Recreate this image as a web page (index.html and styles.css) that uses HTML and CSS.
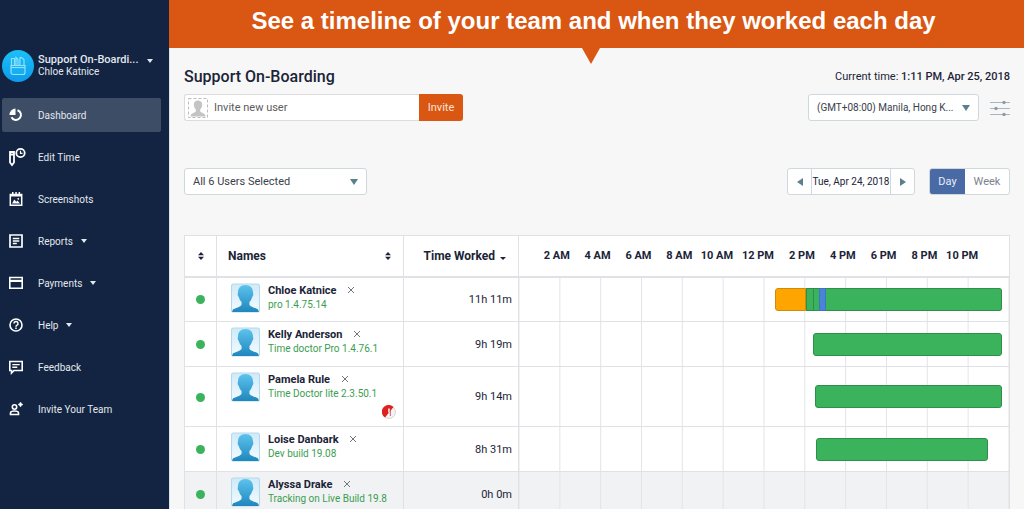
FILE: index.html
```html
<!DOCTYPE html>
<html lang="en">
<head>
  <meta charset="UTF-8">
  <meta name="viewport" content="width=device-width, initial-scale=1">
  <title>Dashboard - Support On-Boarding</title>
  <link rel="stylesheet" href="styles.css">
</head>
<body>

<!-- shared shapes -->
<svg class="sprite" aria-hidden="true">
  <defs>
    <linearGradient id="person-fill" x1="0" y1="0" x2="0" y2="1">
      <stop offset="0" stop-color="#5cc3ee"/>
      <stop offset="1" stop-color="#1f87bd"/>
    </linearGradient>
    <linearGradient id="person-bg" x1="0" y1="0" x2="0" y2="1">
      <stop offset="0" stop-color="#cfeaf8"/>
      <stop offset="1" stop-color="#f4fbff"/>
    </linearGradient>
  </defs>
  <symbol id="person" viewBox="0 0 28 28">
    <rect x="0.5" y="0.5" width="27" height="27" rx="2" fill="url(#person-bg)" stroke="#b5d9ea"/>
    <path d="M14 1.5c-4.600 0-7.200 2.900-7.200 7 0 1-.6 1.300-.3 2.700.3 1.300.9 1.500 1.200 2.300.5 2 1.600 3.400 2.500 4.300v2.600c-.7 2-5.400 2.800-7.700 4.300-.9.700-1.300 1.800-1.300 2.800h25.600c0-1-.4-2.100-1.300-2.800-2.300-1.500-7-2.300-7.700-4.300v-2.600c.9-.9 2-2.300 2.500-4.300.3-.8.900-1 1.200-2.300.3-1.400-.3-1.700-.3-2.700 0-4.100-2.600-7-7.200-7z" fill="url(#person-fill)"/>
  </symbol>
  <symbol id="sort" viewBox="0 0 6 8">
    <path d="M3 0l3 3.300H0zM3 8l3-3.300H0z"/>
  </symbol>
  <symbol id="cross" viewBox="0 0 8 8">
    <path d="M1 1l6 6M7 1l-6 6" fill="none" stroke="#70757c" stroke-width="1"/>
  </symbol>
</svg>

<div class="app">
  <aside class="sidebar">
    <button class="account" type="button">
      <span class="account-logo">
        <svg width="16" height="20" viewBox="0 0 16 20" fill="none" stroke="#8be3ff" stroke-width="1.200">
          <path d="M1.500 9V2.500h3V9M6 9V1.500l2 2v5.500M10 9V1.500h1.500l2.500 2V9"/>
          <path d="M1 9.500h14v7a2 2 0 0 1-2 2H3a2 2 0 0 1-2-2z" fill="#18aef0"/>
          <path d="M1 11.500h14"/>
        </svg>
      </span>
      <span class="account-text">
        <strong>Support On-Boardi...</strong>
        <span>Chloe Katnice</span>
      </span>
      <span class="caret"></span>
    </button>

    <nav class="menu">
      <a class="menu-item active" href="#dashboard">
        <svg class="menu-icon" viewBox="0 0 16 16">
          <path d="M9.500 3.200a5 5 0 1 1-6 7" fill="none" stroke="#fff" stroke-width="2"/>
          <path d="M7.500 1.500v6.500H1.500A6.500 6.500 0 0 1 7.500 1.500z" fill="#fff"/>
        </svg>
        Dashboard
      </a>
      <a class="menu-item" href="#edit-time">
        <svg class="menu-icon wide" viewBox="0 0 18 20" fill="none" stroke="#fff">
          <path d="M2 5h4v10.500L4 18l-2-2.500zM2 7.500h4" stroke-width="1.800"/>
          <circle cx="12.500" cy="6" r="4.200" stroke-width="1.800"/>
          <path d="M12.500 3.800V6.400h2" stroke-width="1.200"/>
        </svg>
        Edit Time
      </a>
      <a class="menu-item" href="#screenshots">
        <svg class="menu-icon" viewBox="0 0 16 16">
          <path d="M2.300 3.500h11.400v10.700H2.300z" fill="none" stroke="#fff" stroke-width="1.500"/>
          <path d="M2 3h12v2.500H2zM4 1h1.500v3H4zM7.300 1h1.500v3H7.300zM10.600 1h1.500v3h-1.500zM4 12.500l2.300-4 2 2.300 1.200-1.300 2.500 3z" fill="#fff"/>
          <circle cx="10.300" cy="7.800" r="0.900" fill="#fff"/>
        </svg>
        Screenshots
      </a>
      <a class="menu-item" href="#reports">
        <svg class="menu-icon" viewBox="0 0 16 16" fill="none" stroke="#fff">
          <path d="M2 2h12v12H2z" stroke-width="1.700"/>
          <path d="M4.800 5.500h6.500M4.800 8h6.500M4.800 10.500h4" stroke-width="1.400"/>
        </svg>
        Reports <span class="caret"></span>
      </a>
      <a class="menu-item" href="#payments">
        <svg class="menu-icon" viewBox="0 0 16 16">
          <path d="M1.800 2.500h12.400v10.800H1.800z" fill="none" stroke="#fff" stroke-width="1.600"/>
          <path d="M2 4.800h12v2.200H2z" fill="#fff"/>
        </svg>
        Payments <span class="caret"></span>
      </a>
      <a class="menu-item" href="#help">
        <svg class="menu-icon" viewBox="0 0 16 16" fill="none" stroke="#fff">
          <circle cx="8" cy="8" r="6" stroke-width="1.600"/>
          <path d="M6 6.600a2 2 0 1 1 2.800 1.800c-.6.300-.8.600-.8 1.300M8 10.600v1.400" stroke-width="1.500"/>
        </svg>
        Help <span class="caret"></span>
      </a>
      <a class="menu-item" href="#feedback">
        <svg class="menu-icon" viewBox="0 0 16 16" fill="none" stroke="#fff">
          <path d="M1.800 2.500h12.400v9H6L3.500 14v-2.500H1.800z" stroke-width="1.600"/>
          <path d="M4.300 5.600h7.400M4.300 8.300h5" stroke-width="1.400"/>
        </svg>
        Feedback
      </a>
      <a class="menu-item" href="#invite">
        <svg class="menu-icon" viewBox="0 0 16 16">
          <circle cx="6.500" cy="6" r="2.200" fill="none" stroke="#fff" stroke-width="1.600"/>
          <path d="M2.500 13.500v-1.500c0-1.600 2-2 4-2s4 .4 4 2v1.500z" fill="none" stroke="#fff" stroke-width="1.600"/>
          <path d="M12.500 1l.9 1.600 1.600.9-1.600.9-.9 1.600-.9-1.600-1.600-.9 1.600-.9z" fill="#fff" stroke="#fff" stroke-width="0.500"/>
        </svg>
        Invite Your Team
      </a>
    </nav>
  </aside>

  <div class="page">
    <div class="banner">See a timeline of your team and when they worked each day</div>

    <main class="content">
      <div class="title-row">
        <h1>Support On-Boarding</h1>
        <p class="current-time">Current time: <strong>1:11 PM, Apr 25, 2018</strong></p>
      </div>

      <div class="bar-row">
        <form class="invite">
          <label class="invite-field">
            <svg width="20" height="20" viewBox="0 0 20 20">
              <rect x="0.500" y="0.500" width="19" height="19" fill="none" stroke="#bcbcbc" stroke-dasharray="3 2"/>
              <path d="M10 2.500c-2.700 0-4.200 1.800-4.200 4.300 0 2 .9 3.700 2 4.700v1.800c-.5 1.500-5.300 1.700-5.300 5.200h15c0-3.500-4.800-3.700-5.300-5.200v-1.800c1.100-1 2-2.700 2-4.700 0-2.500-1.500-4.300-4.200-4.300z" fill="#c4c4c4"/>
            </svg>
            <input type="text" placeholder="Invite new user" aria-label="Invite new user">
          </label>
          <button class="invite-button" type="submit">Invite</button>
        </form>
        <div class="bar-right">
          <div class="select-box timezone">
            <select aria-label="Time zone">
              <option>(GMT+08:00) Manila, Hong K...</option>
            </select>
          </div>
          <button class="settings" type="button" aria-label="Settings">
            <svg width="20" height="16" viewBox="0 0 20 16" stroke="#a9b4bc" fill="#8d9ba5">
              <path d="M0 2.500h20M0 8.500h20M0 14.500h20"/>
              <g stroke="none">
                <circle cx="14" cy="2.500" r="1.700"/>
                <circle cx="6" cy="8.500" r="1.700"/>
                <circle cx="14" cy="14.500" r="1.700"/>
              </g>
            </svg>
          </button>
        </div>
      </div>

      <div class="bar-row filters">
        <div class="select-box users">
          <select aria-label="Users">
            <option>All 6 Users Selected</option>
          </select>
        </div>
        <div class="bar-right">
          <div class="group">
            <button class="step" type="button" aria-label="Previous day"><span class="arrow prev"></span></button>
            <input class="date" type="text" value="Tue, Apr 24, 2018" aria-label="Date">
            <button class="step" type="button" aria-label="Next day"><span class="arrow next"></span></button>
          </div>
          <div class="group view">
            <button class="selected" type="button">Day</button>
            <button type="button">Week</button>
          </div>
        </div>
      </div>

      <table class="timeline">
        <colgroup>
          <col class="col-status">
          <col class="col-name">
          <col class="col-worked">
          <col>
        </colgroup>
        <thead>
          <tr>
            <th class="status"><svg class="sort"><use href="#sort"/></svg></th>
            <th><div class="head-name">Names <svg class="sort"><use href="#sort"/></svg></div></th>
            <th class="worked">Time Worked <span class="caret dark"></span></th>
            <th class="hours-cell">
              <div class="hours">
                <span>2 AM</span><span>4 AM</span><span>6 AM</span><span>8 AM</span><span>10 AM</span><span>12 PM</span><span>2 PM</span><span>4 PM</span><span>6 PM</span><span>8 PM</span><span>10 PM</span>
              </div>
            </th>
          </tr>
        </thead>
        <tbody>
          <tr>
            <td class="status"><span class="dot"></span></td>
            <td class="user-cell">
              <div class="user">
                <svg class="avatar"><use href="#person"/></svg>
                <div>
                  <div class="user-name">Chloe Katnice <button type="button" aria-label="Remove Chloe Katnice"><svg width="8" height="8"><use href="#cross"/></svg></button></div>
                  <div class="version">pro 1.4.75.14</div>
                </div>
              </div>
            </td>
            <td class="worked">11h 11m</td>
            <td class="track">
              <div class="bars">
                <span class="bar orange first" style="left: 52.3%; width: 6.3%"></span>
                <span class="bar mid" style="left: 58.5%; width: 1.7%"></span>
                <span class="bar mid" style="left: 60%; width: 1.4%"></span>
                <span class="bar blue mid" style="left: 61.2%; width: 1.4%"></span>
                <span class="bar last" style="left: 62.6%; width: 36%"></span>
              </div>
            </td>
          </tr>
          <tr>
            <td class="status"><span class="dot"></span></td>
            <td class="user-cell">
              <div class="user">
                <svg class="avatar"><use href="#person"/></svg>
                <div>
                  <div class="user-name">Kelly Anderson <button type="button" aria-label="Remove Kelly Anderson"><svg width="8" height="8"><use href="#cross"/></svg></button></div>
                  <div class="version">Time doctor Pro 1.4.76.1</div>
                </div>
              </div>
            </td>
            <td class="worked">9h 19m</td>
            <td class="track"><div class="bars"><span class="bar" style="left: 60%; width: 38.6%"></span></div></td>
          </tr>
          <tr>
            <td class="status"><span class="dot"></span></td>
            <td class="user-cell">
              <div class="user">
                <svg class="avatar"><use href="#person"/></svg>
                <div>
                  <div class="user-name">Pamela Rule <button type="button" aria-label="Remove Pamela Rule"><svg width="8" height="8"><use href="#cross"/></svg></button></div>
                  <div class="version">Time Doctor lite 2.3.50.1</div>
                </div>
              </div>
              <svg class="alert" viewBox="0 0 14 14">
                <circle cx="7" cy="7" r="6.500" fill="#f3f3f3" stroke="#d5d5d5"/>
                <path d="M3 12.500A6.800 6.800 0 1 1 11.500 2z" fill="#e01f1f"/>
                <path d="M7 3.500v4M7 9v1.500" stroke="#fff" stroke-width="1.500"/>
                <path d="M8.300 5v6" stroke="#c33" stroke-width="0.800"/>
              </svg>
            </td>
            <td class="worked">9h 14m</td>
            <td class="track"><div class="bars"><span class="bar" style="left: 60.5%; width: 38.1%"></span></div></td>
          </tr>
          <tr>
            <td class="status"><span class="dot"></span></td>
            <td class="user-cell">
              <div class="user">
                <svg class="avatar"><use href="#person"/></svg>
                <div>
                  <div class="user-name">Loise Danbark <button type="button" aria-label="Remove Loise Danbark"><svg width="8" height="8"><use href="#cross"/></svg></button></div>
                  <div class="version">Dev build 19.08</div>
                </div>
              </div>
            </td>
            <td class="worked">8h 31m</td>
            <td class="track"><div class="bars"><span class="bar" style="left: 60.6%; width: 35.2%"></span></div></td>
          </tr>
          <tr class="idle">
            <td class="status"><span class="dot"></span></td>
            <td class="user-cell">
              <div class="user">
                <svg class="avatar"><use href="#person"/></svg>
                <div>
                  <div class="user-name">Alyssa Drake <button type="button" aria-label="Remove Alyssa Drake"><svg width="8" height="8"><use href="#cross"/></svg></button></div>
                  <div class="version">Tracking on Live Build 19.8</div>
                </div>
              </div>
            </td>
            <td class="worked">0h 0m</td>
            <td class="track"></td>
          </tr>
        </tbody>
      </table>
    </main>
  </div>
</div>

</body>
</html>
```
FILE: styles.css
```css
* {
  box-sizing: border-box;
}

body {
  margin: 0;
  background: #f7f7f7;
  color: #1b2437;
  font-family: Roboto, "Liberation Sans", sans-serif;
  font-size: 11px;
}

button, input, select {
  margin: 0;
  padding: 0;
  border: 0;
  background: none;
  color: inherit;
  font: inherit;
}

svg {
  display: block;
  flex: none;
}

.sprite {
  position: absolute;
  width: 0;
  height: 0;
}

.app {
  display: flex;
  height: 100vh;
  overflow: hidden;
}

/* sidebar */
.sidebar {
  flex: none;
  width: 169px;
  padding: 49px 8px 0 2px;
  background: #122441;
  color: #e3e7ee;
}

.account {
  display: flex;
  align-items: center;
  width: 100%;
  height: 34px;
  text-align: left;
}

.account-logo {
  display: flex;
  align-items: center;
  justify-content: center;
  flex: none;
  width: 32px;
  height: 32px;
  margin-right: 4px;
  border-radius: 50%;
  background: linear-gradient(#1cc0f8, #0d9bea);
}

.account-text {
  flex: 1;
  line-height: 12px;
  font-size: 10px;
  white-space: nowrap;
}

.account-text strong, .account-text span {
  display: block;
}

.account-text strong {
  font-size: 11px;
  font-weight: 500;
}

.caret {
  display: inline-block;
  border: 3px solid transparent;
  border-top: 4px solid currentColor;
  border-bottom: 0;
}

.account .caret {
  margin: 0 8px 10px 0;
}

.menu {
  display: flex;
  flex-direction: column;
  gap: 8px;
  margin-top: 15px;
}

.menu-item {
  display: flex;
  align-items: center;
  height: 34px;
  padding-left: 6px;
  border-radius: 2px;
  color: inherit;
  font-size: 10px;
  text-decoration: none;
}

.menu-item.active {
  background: #3e4d66;
}

.menu-icon {
  width: 16px;
  height: 16px;
  margin-right: 14px;
}

.menu-icon.wide {
  width: 18px;
  height: 20px;
  margin-right: 12px;
}

.menu-item .caret {
  margin-left: 8px;
}

/* banner */
.page {
  flex: 1;
  min-width: 0;
}

.banner {
  position: relative;
  height: 48px;
  padding-right: 6px;
  background: #d95613;
  color: #fff;
  font-family: "Liberation Sans", Arial, sans-serif;
  font-size: 24px;
  font-weight: bold;
  line-height: 42px;
  text-align: center;
  white-space: nowrap;
}

.banner::after {
  content: "";
  position: absolute;
  top: 100%;
  left: calc(50% - 15px);
  border: 9px solid transparent;
  border-top: 16px solid #d95613;
  border-bottom: 0;
}

.content {
  min-height: calc(100vh - 48px);
  padding: 20px 14px 0;
  border-left: 1px solid #d9e3ee;
}

.title-row, .bar-row {
  display: flex;
  justify-content: space-between;
}

h1 {
  margin: 0;
  font-size: 16px;
  font-weight: 500;
  line-height: 18px;
}

.current-time {
  margin: 0;
  line-height: 18px;
}

.current-time strong {
  font-weight: 500;
}

.bar-row {
  height: 27px;
  margin-top: 8px;
}

.filters {
  margin-top: 47px;
}

.bar-right {
  display: flex;
  gap: 14px;
}

.invite {
  display: flex;
  width: 279px;
}

.invite-field {
  display: flex;
  flex: 1;
  align-items: center;
  gap: 6px;
  padding-left: 3px;
  border: 1px solid #dcdcdc;
  border-right: 0;
  border-radius: 3px 0 0 3px;
  background: #fff;
}

.invite-field input {
  flex: 1;
  min-width: 0;
  outline: none;
}

.invite-field input::placeholder {
  color: #5c5c5c;
}

.invite-button {
  width: 44px;
  border-radius: 0 3px 3px 0;
  background: #d95613;
  color: #fbe5d8;
}

.select-box {
  position: relative;
}

.select-box select {
  width: 100%;
  height: 27px;
  padding: 0 20px 0 8px;
  appearance: none;
  border: 1px solid #cfd8dc;
  border-radius: 3px;
  background: #fff;
  color: #3a414b;
}

.select-box::after {
  content: "";
  position: absolute;
  top: 11px;
  right: 9px;
  border: 4px solid transparent;
  border-top: 6px solid #5b7f8c;
  border-bottom: 0;
  pointer-events: none;
}

.timezone {
  width: 171px;
  margin-right: -3px;
}

.timezone select {
  font-size: 10px;
}

.users {
  width: 183px;
}

.group {
  display: flex;
  border: 1px solid #cfd8dc;
  border-radius: 3px;
  background: #fff;
  overflow: hidden;
}

.step {
  display: flex;
  align-items: center;
  justify-content: center;
  width: 23px;
}

.date {
  width: 80px;
  border: 1px solid #cfd8dc;
  border-width: 0 1px;
  font-size: 10px;
  text-align: center;
}

.arrow {
  border: 4px solid transparent;
}

.arrow.prev {
  border-right: 6px solid #5b7f8c;
  border-left: 0;
}

.arrow.next {
  border-left: 6px solid #5b7f8c;
  border-right: 0;
}

.view button {
  width: 44px;
  color: #7a828c;
}

.view .selected {
  width: 35px;
  background: #4a6aa5;
  color: #e8eef8;
}

/* timeline table */
.timeline {
  width: 100%;
  margin-top: 40px;
  table-layout: fixed;
  border-collapse: collapse;
  background: #fff;
}

.col-status {
  width: 32px;
}

.col-name {
  width: 187px;
}

.col-worked {
  width: 115px;
}

.timeline th, .timeline td {
  height: 45px;
  padding: 0;
  border: 1px solid #dfe1e5;
}

.timeline th {
  height: 41px;
  font-size: 12px;
  font-weight: 700;
  text-align: left;
}

.timeline thead {
  border-bottom: 2px solid #dfe1e5;
}

.timeline .status {
  text-align: center;
}

.sort {
  width: 6px;
  height: 8px;
  fill: #1b2437;
}

.status .sort {
  margin: 0 auto;
}

.head-name {
  display: flex;
  align-items: center;
  justify-content: space-between;
  padding: 0 12px 0 11px;
}

.timeline .worked {
  padding-right: 6px;
  text-align: right;
  white-space: nowrap;
}

.timeline th.worked {
  padding-right: 12px;
}

.caret.dark {
  margin-left: 2px;
  border-width: 3px 3px 0;
}

.timeline .hours-cell {
  overflow: hidden;
}

/* labels end just past their grid line */
.hours {
  display: grid;
  grid-template-columns: repeat(12, 1fr);
  margin: 0 -10px 0 10px;
  font-size: 11px;
  text-align: right;
  white-space: nowrap;
}

.dot {
  display: inline-block;
  width: 9px;
  height: 9px;
  border-radius: 50%;
  background: #3bb35c;
  vertical-align: middle;
}

.timeline .user-cell {
  padding: 5px 0 5px 14px;
  vertical-align: top;
}

.user {
  display: flex;
  gap: 8px;
}

.avatar {
  width: 29px;
  height: 30px;
}

.user-name {
  font-weight: 700;
  line-height: 15px;
  white-space: nowrap;
}

.user-name button {
  margin-left: 8px;
}

.version {
  color: #3a9e50;
  font-size: 10px;
  line-height: 13px;
}

.alert {
  width: 14px;
  height: 14px;
  margin: 3px 7px 2px auto;
}

.track {
  background: linear-gradient(to left, #e2e4e7 1px, transparent 1px) 0 0 / calc(100% / 12) 100%;
}

.bars {
  position: relative;
  height: 23px;
}

.bar {
  position: absolute;
  top: 0;
  height: 23px;
  border: 1px solid #2f8f4a;
  border-radius: 3px;
  background: #3bb35c;
}

.bar.orange {
  border-color: #d18b0c;
  background: #ffa500;
}

.bar.blue {
  border-color: #3f74c4;
  background: #4a84d9;
}

.bar.first {
  border-radius: 3px 0 0 3px;
}

.bar.mid {
  border-radius: 0;
}

.bar.last {
  border-left: 0;
  border-radius: 0 3px 3px 0;
}

.idle {
  background: #f1f2f4;
}
```
